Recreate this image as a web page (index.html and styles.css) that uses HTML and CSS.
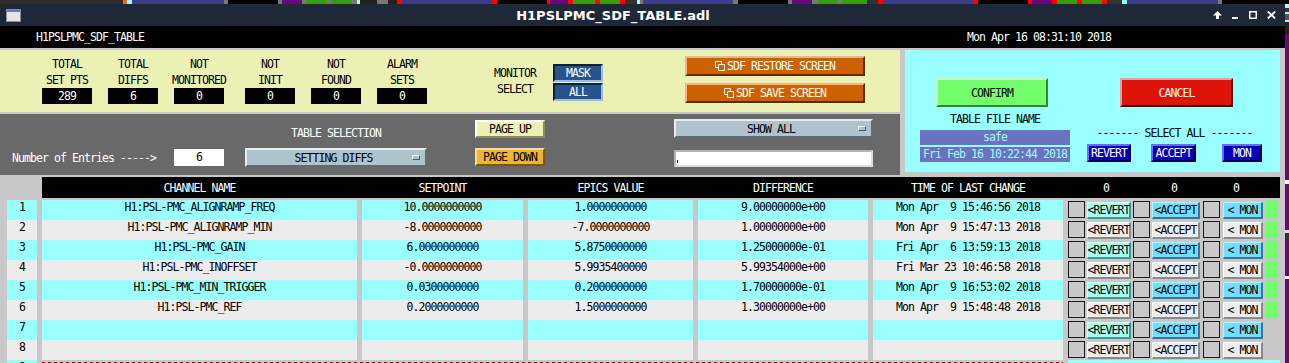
FILE: index.html
```html
<!DOCTYPE html>
<html lang="en">
<head>
    <meta charset="UTF-8">
    <title>H1PSLPMC_SDF_TABLE.adl</title>
    <link rel="stylesheet" href="styles.css">
</head>
<body>
    <div class="desktop-strip"></div>
    <div class="screen">
        <div class="window">
            <div class="titlebar">
                <div class="app-icon">
                    <svg width="15" height="13" viewBox="0 0 15 13">
                        <rect x="0.5" y="0.5" width="14" height="12" fill="#e6e6e6" stroke="#8c8c8c"/>
                        <rect x="1" y="1" width="13" height="2" fill="#5a7cc4"/>
                    </svg>
                </div>
                <div class="title">H1PSLPMC_SDF_TABLE.adl</div>
                <div class="win-controls">
                    <svg class="wc-up" width="9" height="8" viewBox="0 0 9 8"><path d="M4.5 0 L9 4.5 H6 V8 H3 V4.5 H0 Z" fill="#fff"/></svg>
                    <svg class="wc-min" width="6" height="8" viewBox="0 0 6 8"><rect x="0" y="6" width="6" height="2" fill="#fff"/></svg>
                    <svg class="wc-max" width="8" height="8" viewBox="0 0 8 8"><rect x="0.75" y="0.75" width="6.5" height="6.5" fill="none" stroke="#fff" stroke-width="1.5"/></svg>
                    <svg class="wc-close" width="9" height="8" viewBox="0 0 9 8"><path d="M0.8 0.5 L8.2 7.5 M8.2 0.5 L0.8 7.5" stroke="#fff" stroke-width="1.8"/></svg>
                </div>
            </div>

            <div class="infobar">
                <span class="screen-name">H1PSLPMC_SDF_TABLE</span>
                <span class="clock">Mon Apr 16 08:31:10 2018</span>
            </div>

            <div class="top">
                <div class="left-panels">
                    <div class="status-panel">
                        <div class="stats">
                            <div class="stat"><div class="stat-label">TOTAL<br>SET PTS</div><div class="readout">289</div></div>
                            <div class="stat"><div class="stat-label">TOTAL<br>DIFFS</div><div class="readout">6</div></div>
                            <div class="stat"><div class="stat-label">NOT<br>MONITORED</div><div class="readout">0</div></div>
                            <div class="stat spaced"><div class="stat-label">NOT<br>INIT</div><div class="readout">0</div></div>
                            <div class="stat"><div class="stat-label">NOT<br>FOUND</div><div class="readout">0</div></div>
                            <div class="stat"><div class="stat-label">ALARM<br>SETS</div><div class="readout">0</div></div>
                        </div>
                        <div class="monitor-label">MONITOR<br>SELECT</div>
                        <div class="monitor-buttons">
                            <div class="btn btn-mask">MASK</div>
                            <div class="btn btn-mask">ALL</div>
                        </div>
                        <div class="sdf-buttons">
                            <div class="btn btn-orange">
                                <svg width="11" height="10" viewBox="0 0 11 10"><path d="M0.5 0.5 H6.5 V3.5 M0.5 0.5 V6.5 H3.5 M3.5 3.5 H9.5 V9.5 H3.5 Z" fill="none" stroke="#fff"/></svg>SDF RESTORE SCREEN
                            </div>
                            <div class="btn btn-orange">
                                <svg width="11" height="10" viewBox="0 0 11 10"><path d="M0.5 0.5 H6.5 V3.5 M0.5 0.5 V6.5 H3.5 M3.5 3.5 H9.5 V9.5 H3.5 Z" fill="none" stroke="#fff"/></svg>SDF SAVE SCREEN
                            </div>
                        </div>
                    </div>

                    <div class="control-panel">
                        <div class="entries-label">Number of Entries -----&gt;</div>
                        <div class="entries-box">6</div>
                        <div class="table-select">
                            <div class="select-title">TABLE SELECTION</div>
                            <div class="menu"><span></span><span>SETTING DIFFS</span><span class="menu-mark"></span></div>
                        </div>
                        <div class="page-buttons">
                            <div class="btn btn-page-up">PAGE UP</div>
                            <div class="btn btn-page-down">PAGE DOWN</div>
                        </div>
                        <div class="show-col">
                            <div class="menu"><span></span><span>SHOW ALL</span><span class="menu-mark"></span></div>
                            <div class="field"><span class="caret"></span></div>
                        </div>
                    </div>
                </div>

                <div class="confirm-panel">
                    <div class="file-col">
                        <div class="btn btn-confirm">CONFIRM</div>
                        <div class="file-label">TABLE FILE NAME</div>
                        <div class="file-box">safe</div>
                        <div class="file-box file-date">Fri Feb 16 10:22:44 2018</div>
                    </div>
                    <div class="select-col">
                        <div class="btn btn-cancel">CANCEL</div>
                        <div class="select-label">------- SELECT ALL -------</div>
                        <div class="select-buttons">
                            <div class="btn btn-all revert-all">REVERT</div>
                            <div class="btn btn-all accept-all">ACCEPT</div>
                            <div class="btn btn-all mon-all">MON</div>
                        </div>
                    </div>
                </div>
            </div>

            <div class="table">
                <div class="thead">
                    <div>CHANNEL NAME</div>
                    <div>SETPOINT</div>
                    <div>EPICS VALUE</div>
                    <div>DIFFERENCE</div>
                    <div>TIME OF LAST CHANGE</div>
                    <div class="counts"><span>0</span><span>0</span><span>0</span></div>
                </div>

                <div class="tbody">
                    <div class="row">
                        <div class="idx">1</div>
                        <div class="cell">H1:PSL-PMC_ALIGNRAMP_FREQ</div>
                        <div class="cell">10.0000000000</div>
                        <div class="cell">1.0000000000</div>
                        <div class="cell">9.00000000e+00</div>
                        <div class="cell">Mon Apr  9 15:46:56 2018</div>
                        <div class="actions"><span class="chk"></span><span class="rbtn revert">&lt;REVERT</span><span class="chk"></span><span class="rbtn accept">&lt;ACCEPT</span><span class="chk"></span><span class="rbtn mon">&lt; MON</span><span class="ind"></span></div>
                    </div>
                    <div class="row">
                        <div class="idx">2</div>
                        <div class="cell">H1:PSL-PMC_ALIGNRAMP_MIN</div>
                        <div class="cell">-8.0000000000</div>
                        <div class="cell">-7.0000000000</div>
                        <div class="cell">1.00000000e+00</div>
                        <div class="cell">Mon Apr  9 15:47:13 2018</div>
                        <div class="actions"><span class="chk"></span><span class="rbtn revert">&lt;REVERT</span><span class="chk"></span><span class="rbtn accept">&lt;ACCEPT</span><span class="chk"></span><span class="rbtn mon">&lt; MON</span><span class="ind"></span></div>
                    </div>
                    <div class="row">
                        <div class="idx">3</div>
                        <div class="cell">H1:PSL-PMC_GAIN</div>
                        <div class="cell">6.0000000000</div>
                        <div class="cell">5.8750000000</div>
                        <div class="cell">1.25000000e-01</div>
                        <div class="cell">Fri Apr  6 13:59:13 2018</div>
                        <div class="actions"><span class="chk"></span><span class="rbtn revert">&lt;REVERT</span><span class="chk"></span><span class="rbtn accept">&lt;ACCEPT</span><span class="chk"></span><span class="rbtn mon">&lt; MON</span><span class="ind"></span></div>
                    </div>
                    <div class="row">
                        <div class="idx">4</div>
                        <div class="cell">H1:PSL-PMC_INOFFSET</div>
                        <div class="cell">-0.0000000000</div>
                        <div class="cell">5.9935400000</div>
                        <div class="cell">5.99354000e+00</div>
                        <div class="cell">Fri Mar 23 10:46:58 2018</div>
                        <div class="actions"><span class="chk"></span><span class="rbtn revert">&lt;REVERT</span><span class="chk"></span><span class="rbtn accept">&lt;ACCEPT</span><span class="chk"></span><span class="rbtn mon">&lt; MON</span><span class="ind"></span></div>
                    </div>
                    <div class="row">
                        <div class="idx">5</div>
                        <div class="cell">H1:PSL-PMC_MIN_TRIGGER</div>
                        <div class="cell">0.0300000000</div>
                        <div class="cell">0.2000000000</div>
                        <div class="cell">1.70000000e-01</div>
                        <div class="cell">Mon Apr  9 16:53:02 2018</div>
                        <div class="actions"><span class="chk"></span><span class="rbtn revert">&lt;REVERT</span><span class="chk"></span><span class="rbtn accept">&lt;ACCEPT</span><span class="chk"></span><span class="rbtn mon">&lt; MON</span><span class="ind"></span></div>
                    </div>
                    <div class="row">
                        <div class="idx">6</div>
                        <div class="cell">H1:PSL-PMC_REF</div>
                        <div class="cell">0.2000000000</div>
                        <div class="cell">1.5000000000</div>
                        <div class="cell">1.30000000e+00</div>
                        <div class="cell">Mon Apr  9 15:48:48 2018</div>
                        <div class="actions"><span class="chk"></span><span class="rbtn revert">&lt;REVERT</span><span class="chk"></span><span class="rbtn accept">&lt;ACCEPT</span><span class="chk"></span><span class="rbtn mon">&lt; MON</span><span class="ind"></span></div>
                    </div>
                    <div class="row">
                        <div class="idx">7</div>
                        <div class="cell"></div>
                        <div class="cell"></div>
                        <div class="cell"></div>
                        <div class="cell"></div>
                        <div class="cell"></div>
                        <div class="actions"><span class="chk"></span><span class="rbtn revert">&lt;REVERT</span><span class="chk"></span><span class="rbtn accept">&lt;ACCEPT</span><span class="chk"></span><span class="rbtn mon">&lt; MON</span></div>
                    </div>
                    <div class="row">
                        <div class="idx">8</div>
                        <div class="cell"></div>
                        <div class="cell"></div>
                        <div class="cell"></div>
                        <div class="cell"></div>
                        <div class="cell"></div>
                        <div class="actions"><span class="chk"></span><span class="rbtn revert">&lt;REVERT</span><span class="chk"></span><span class="rbtn accept">&lt;ACCEPT</span><span class="chk"></span><span class="rbtn mon">&lt; MON</span></div>
                    </div>
                    <div class="row">
                        <div class="idx">9</div>
                        <div class="cell"></div>
                        <div class="cell"></div>
                        <div class="cell"></div>
                        <div class="cell"></div>
                        <div class="cell"></div>
                        <div class="actions"><span class="chk"></span><span class="rbtn revert">&lt;REVERT</span><span class="chk"></span><span class="rbtn accept">&lt;ACCEPT</span><span class="chk"></span><span class="rbtn mon">&lt; MON</span></div>
                        <div class="page-break"></div>
                    </div>
                </div>
            </div>
        </div>
        <div class="desk-edge"></div>
    </div>
</body>
</html>
```

FILE: styles.css
```css
* {
    margin: 0;
    padding: 0;
    box-sizing: border-box;
}

html, body {
    height: 363px;
    overflow: hidden;
}

body {
    background: #1c1c1c;
    font-family: "DejaVu Sans Mono", "Liberation Mono", monospace;
    font-size: 11.5px;
    letter-spacing: -0.92px;
    color: #000;
}

/* bits of other windows behind this one */
.desktop-strip {
    height: 4px;
    background: linear-gradient(90deg,
        #2e2e2e 0 123px, #e07020 123px 127px, #99ffff 127px 132px, #3c3c88 132px 224px,
        #777 224px 228px, #000 228px 278px, #777 278px 282px, #620a78 282px 302px,
        #777 302px 306px, #3a9a10 306px 327px, #777 327px 332px, #3a9a10 332px 352px,
        #777 352px 357px, #99ffff 357px 360px, #222 360px 377px, #777 377px 388px,
        #222 388px 397px, #f00 397px 402px, #3c3c88 402px 492px, #f00 492px 497px,
        #000 497px 547px, #f00 547px 550px, #620a78 550px 568px, #f00 568px 573px,
        #3a9a10 573px 595px, #f00 595px 600px, #3a9a10 600px 620px, #f00 620px 625px,
        #333 625px 637px, #99ffff 637px 640px, #777 640px 643px, #3c3c88 643px 733px,
        #777 733px 738px, #000 738px 788px, #777 788px 792px, #620a78 792px 812px,
        #777 812px 817px, #3a9a10 817px 837px, #777 837px 842px, #3a9a10 842px 867px,
        #333 867px 878px, #f00 878px 883px, #3c3c88 883px 973px, #f00 973px 978px,
        #000 978px 1028px, #f00 1028px 1032px, #620a78 1032px 1052px, #f00 1052px 1057px,
        #3a9a10 1057px 1077px, #f00 1077px 1082px, #3a9a10 1082px 1102px, #f00 1102px 1107px,
        #333 1107px 1122px, #99ffff 1122px 1127px, #3c3c88 1127px 1218px, #777 1218px 1222px,
        #000 1222px 1289px);
}

.screen {
    display: flex;
    background: #2a2a2a;
}

.window {
    width: 1285px;
    flex-shrink: 0;
}

.desk-edge {
    width: 4px;
    height: 359px;
    background: linear-gradient(180deg,
        #99ffff 0 4px, #333 4px 8px, #99ffff 8px 10px, #555 10px 16px,
        #99ffff 16px 18px, #222 18px 30px, #620a78 30px 176px, #fff 176px 180px,
        #620a78 180px 226px, #ddd 226px 229px, #333 229px 236px, #620a78 236px 272px,
        #fff 272px 275px, #620a78 275px 363px);
}

/* title bar */
.titlebar {
    height: 22px;
    background: #1e2838;
    border-radius: 6px 6px 0 0;
    display: flex;
    align-items: center;
    color: #fff;
}

.app-icon {
    margin-left: 6px;
    width: 15px;
    height: 13px;
    display: flex;
}

.title {
    flex: 1;
    text-align: center;
    font-family: "DejaVu Sans", sans-serif;
    font-weight: bold;
    font-size: 13px;
    letter-spacing: 0;
}

.win-controls {
    width: 80px;
    display: flex;
    align-items: center;
}

.wc-up { margin-left: 8px; }
.wc-min { margin-left: 10px; }
.wc-max { margin-left: 11px; }
.wc-close { margin-left: 10px; }

.infobar {
    height: 22px;
    background: #000;
    color: #fff;
    display: flex;
    align-items: center;
}

.screen-name {
    padding-left: 36px;
}

.clock {
    margin-left: auto;
    padding-right: 174px;
}

/* top panels */
.top {
    display: flex;
    background: #c8c8c8;
    padding-top: 2px;
    height: 127px;
}

.left-panels {
    width: 900px;
    display: flex;
    flex-direction: column;
    gap: 2px;
}

.btn {
    display: flex;
    align-items: center;
    justify-content: center;
    border-style: solid;
    border-width: 2px;
    white-space: nowrap;
}

.status-panel {
    height: 62px;
    background: #ebf1b5;
    display: flex;
    align-items: flex-start;
}

.stats {
    display: flex;
    gap: 16px;
    padding: 6px 0 0 42px;
}

.stat {
    width: 50px;
    display: flex;
    flex-direction: column;
    align-items: center;
}

.stat.spaced {
    margin-left: 5px;
}

.stat-label {
    line-height: 16px;
    text-align: center;
    white-space: nowrap;
}

.readout {
    width: 50px;
    height: 16px;
    line-height: 16px;
    background: #000;
    color: #fff;
    text-align: center;
}

.monitor-label {
    margin: 15px 0 0 67px;
    width: 42px;
    line-height: 16px;
    text-align: center;
    white-space: nowrap;
}

.monitor-buttons {
    margin: 14px 0 0 17px;
    width: 50px;
    display: flex;
    flex-direction: column;
    gap: 1px;
}

.btn-mask {
    height: 18px;
    background: #27548d;
    color: #fff;
    border-color: #0c1f3c #9cbce4 #9cbce4 #0c1f3c;
}

.sdf-buttons {
    margin: 6px 0 0 82px;
    width: 180px;
    display: flex;
    flex-direction: column;
    gap: 7px;
}

.btn-orange {
    height: 20px;
    background: #cd6100;
    color: #fff;
    border-color: #eeb48a #5e2a00 #5e2a00 #eeb48a;
}

.btn-orange svg {
    margin-right: 1px;
}

.control-panel {
    height: 61px;
    background: #696969;
    display: flex;
    align-items: flex-start;
    color: #fff;
}

.entries-label {
    margin: 37px 0 0 12px;
    width: 144px;
    line-height: 14px;
    white-space: nowrap;
}

.entries-box {
    margin: 35px 0 0 18px;
    width: 50px;
    height: 17px;
    line-height: 17px;
    background: #fff;
    color: #000;
    text-align: center;
}

.table-select {
    margin-left: 21px;
    width: 182px;
}

.select-title {
    margin-top: 12px;
    line-height: 14px;
    text-align: center;
}

.menu {
    display: grid;
    grid-template-columns: 1fr auto 1fr;
    align-items: center;
    height: 19px;
    background: #aec3cb;
    color: #000;
    border: 2px solid;
    border-color: #e4eef1 #5c6c72 #5c6c72 #e4eef1;
    padding-right: 5px;
    white-space: nowrap;
}

.table-select .menu {
    margin-top: 8px;
}

.menu-mark {
    justify-self: end;
    width: 8px;
    height: 5px;
    background: #aec3cb;
    border: 1px solid;
    border-color: #fff #4a5a60 #4a5a60 #fff;
}

.page-buttons {
    margin-left: 48px;
    width: 70px;
    color: #000;
}

.btn-page-up {
    margin-top: 6px;
    height: 18px;
    background: #ebf1b5;
    border-color: #ffffff #8b8b60 #8b8b60 #ffffff;
}

.btn-page-down {
    margin-top: 10px;
    height: 18px;
    background: #eeb62b;
    border-color: #f8dc98 #7a5410 #7a5410 #f8dc98;
}

.show-col {
    margin-left: 129px;
    width: 199px;
}

.show-col .menu {
    margin-top: 5px;
}

.field {
    margin-top: 12px;
    height: 17px;
    background: #fff;
    border: 2px solid;
    border-color: #b4b4b4 #dcdcdc #dcdcdc #b4b4b4;
    display: flex;
    align-items: center;
}

.caret {
    width: 1px;
    height: 3px;
    background: #000;
    margin: 6px 0 0 1px;
}

/* confirm / select all panel */
.confirm-panel {
    margin-left: 5px;
    width: 375px;
    height: 122px;
    background: #99ffff;
    display: flex;
    align-items: flex-start;
}

.file-col {
    margin-left: 15px;
    width: 150px;
    display: flex;
    flex-direction: column;
}

.btn-confirm {
    margin: 28px 0 0 16px;
    width: 112px;
    height: 29px;
    background: #73ff6b;
    border-color: #c4ffc0 #2f8a28 #2f8a28 #c4ffc0;
}

.file-label {
    margin-top: 5px;
    line-height: 14px;
    text-align: center;
    white-space: nowrap;
}

.file-box {
    margin-top: 4px;
    height: 15px;
    line-height: 15px;
    background: #6a73c1;
    color: #a8f6ff;
    text-align: center;
    white-space: nowrap;
}

.file-box.file-date {
    margin-top: 2px;
}

.select-col {
    margin-left: 17px;
    width: 175px;
}

.btn-cancel {
    margin: 28px 0 0 33px;
    width: 113px;
    height: 29px;
    background: #de1309;
    color: #fff;
    border-color: #f29a94 #6a0400 #6a0400 #f29a94;
}

.select-label {
    margin-top: 19px;
    line-height: 14px;
    text-align: center;
    white-space: nowrap;
}

.select-buttons {
    margin-top: 4px;
    display: flex;
}

.btn-all {
    height: 18px;
    background: #0a00b8;
    color: #fff;
    border-color: #6a6aff #00004a #00004a #6a6aff;
}

.revert-all { width: 44px; }
.accept-all { width: 45px; margin-left: 20px; }
.mon-all { width: 40px; margin-left: 26px; }

/* table */
.table {
    background: #c8c8c8;
    padding: 2px 5px 0 7px;
}

.thead {
    margin: 0 0 2px 35px;
    height: 21px;
    background: #000;
    color: #fff;
    display: grid;
    grid-template-columns: 320px 166px 170px 175px 195px 1fr;
    align-items: center;
}

.thead > div {
    text-align: center;
    padding-right: 5px;
    white-space: nowrap;
}

.thead > .counts {
    display: grid;
    grid-template-columns: 68px 62px auto;
    padding: 0 0 0 35px;
    text-align: left;
}

.row {
    display: grid;
    grid-template-columns: 30px 315px 161px 165px 170px 190px 1fr;
    column-gap: 5px;
    height: 20px;
}

.idx, .cell {
    background: #99ffff;
    text-align: center;
    line-height: 14px;
    white-space: pre;
}

.row:nth-child(even) .idx,
.row:nth-child(even) .cell {
    background: #ececec;
}

.actions {
    display: flex;
    align-items: flex-start;
    padding-top: 1px;
}

.chk {
    width: 17px;
    height: 17px;
    background: #c8c8c8;
    border: 1px solid #1a1a1a;
}

.rbtn {
    margin-top: 1px;
    height: 17px;
    display: flex;
    align-items: center;
    justify-content: center;
    white-space: pre;
    border-style: solid;
    border-width: 1px 2px 2px 1px;
    overflow: visible;
}

.rbtn.revert { width: 44px; margin-left: 2px; background: #a2fff0; border-color: #dcfffa #3c9890 #3c9890 #dcfffa; }
.rbtn.accept { width: 48px; background: #73dfff; border-color: #b8f2ff #33789a #33789a #b8f2ff; }
.rbtn.mon { width: 40px; background: #73dfff; border-color: #b8f2ff #33789a #33789a #b8f2ff; }

.actions .chk:nth-child(3) { margin-left: 2px; }
.actions .accept { margin-left: 2px; }
.actions .chk:nth-child(5) { margin-left: 3px; }
.actions .mon { margin-left: 3px; }

.row:nth-child(even) .rbtn {
    background: #ececec;
    border-color: #ffffff #8a8a8a #8a8a8a #ffffff;
}

.ind {
    margin-left: 3px;
    width: 12px;
    height: 17px;
    background: #73ff6b;
}

.page-break {
    grid-row: 1;
    grid-column: 2 / 7;
    align-self: start;
    margin-top: 2px;
    height: 1px;
    background: repeating-linear-gradient(90deg, #8a0000 0 3px, transparent 3px 6px);
}
```
